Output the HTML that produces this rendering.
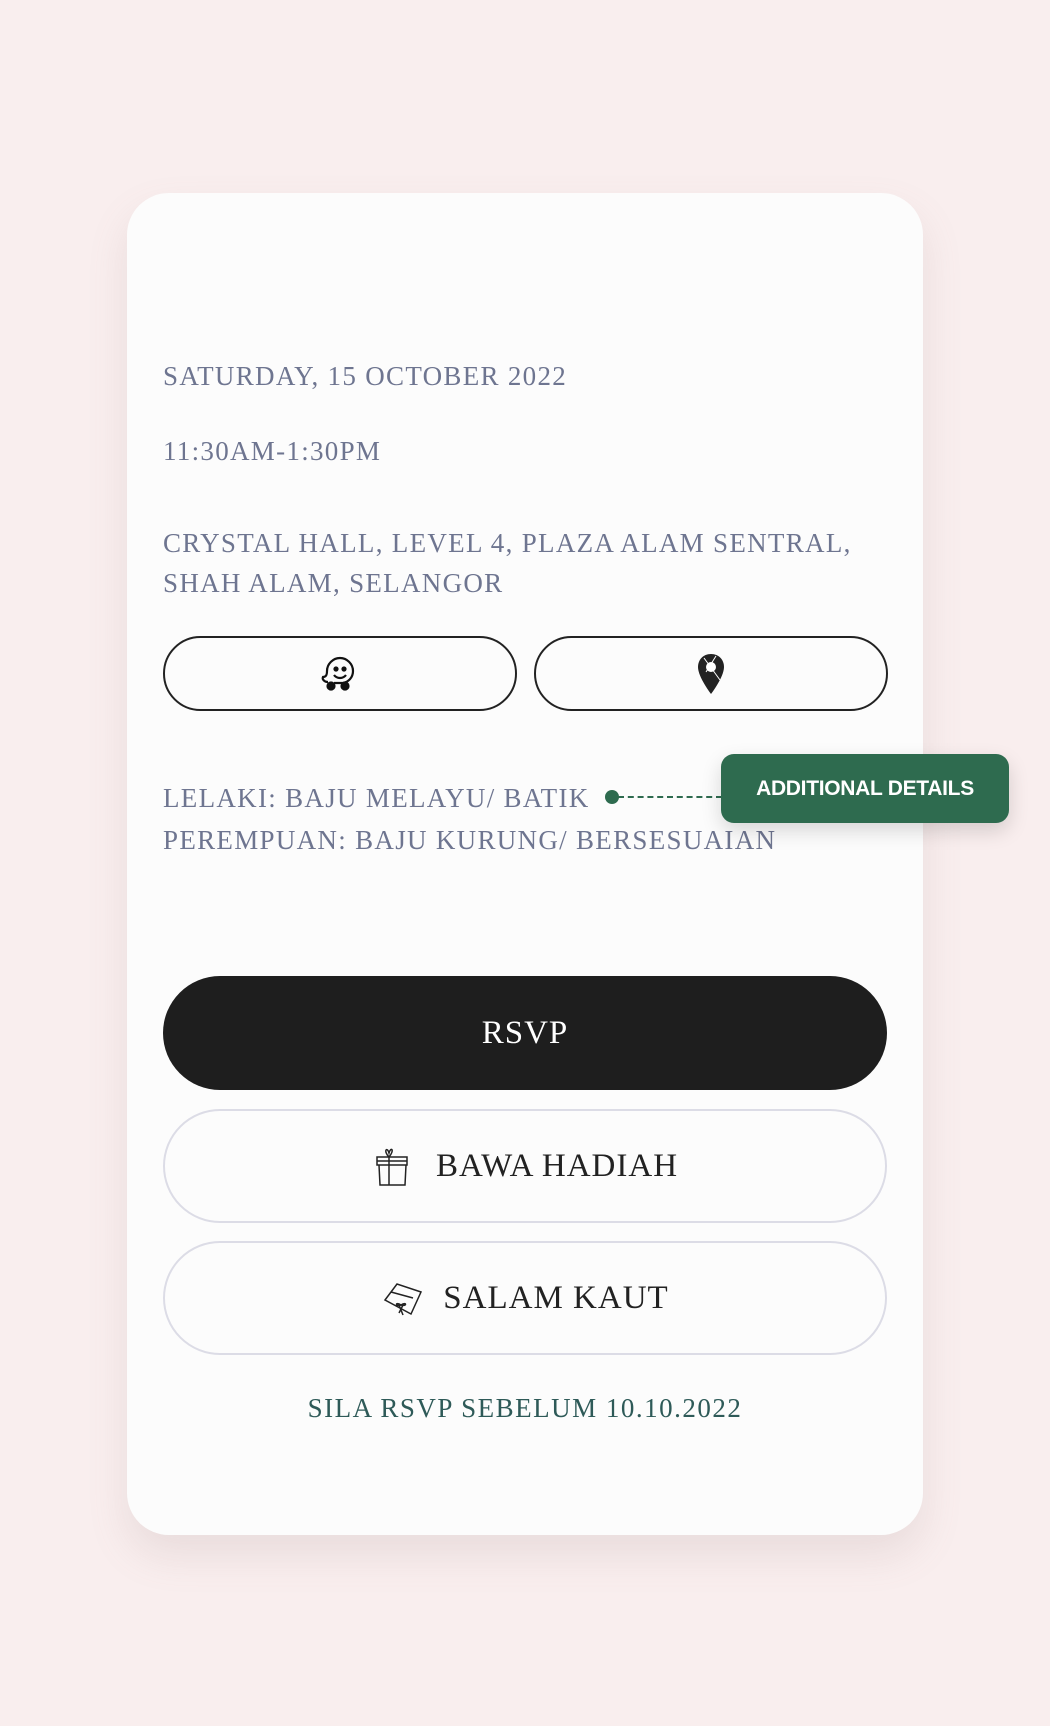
<!DOCTYPE html>
<html><head><meta charset="utf-8"><style>
*{margin:0;padding:0;box-sizing:border-box}
body{width:1050px;height:1726px;background:#f9eeee;position:relative;font-family:"Liberation Serif",serif;overflow:hidden}
.card{position:absolute;left:127px;top:193px;width:796px;height:1342px;background:#fcfcfc;border-radius:42px;box-shadow:0 20px 40px rgba(150,120,120,.15)}
.t{position:absolute;left:163px;color:#6e7590;font-size:27px;letter-spacing:1.3px;line-height:40px;white-space:nowrap}
.pill{position:absolute;border-radius:60px;display:flex;align-items:center;justify-content:center}
.nav{top:636px;height:75px;width:354px;border:2px solid #222}
.big{left:163px;width:724px;height:114px;font-size:33px;color:#222;letter-spacing:1px}
.ol{border:2px solid #dcdce6}
</style></head><body>
<div class="card"></div>
<div class="t" style="top:356px">SATURDAY, 15 OCTOBER 2022</div>
<div class="t" style="top:431px">11:30AM-1:30PM</div>
<div class="t" style="top:523px">CRYSTAL HALL, LEVEL 4, PLAZA ALAM SENTRAL,</div>
<div class="t" style="top:563px">SHAH ALAM, SELANGOR</div>
<div class="pill nav" style="left:163px"><svg width="44" height="40" viewBox="0 0 44 40" fill="none" stroke="#111" stroke-width="2.2"><path d="M10 28c-4 0-6-3-5-5 3 0 4-2 4-6 0-7 6-13 13-13s13 6 13 13c0 7-5 11-10 12H16"/><circle cx="18" cy="15" r="1.5" fill="#111"/><circle cx="26" cy="15" r="1.5" fill="#111"/><path d="M16 21c3 4 9 4 12 0"/><circle cx="13" cy="32" r="3.5" fill="#111"/><circle cx="27" cy="32" r="3.5" fill="#111"/></svg></div>
<div class="pill nav" style="left:534px"><svg width="30" height="44" viewBox="0 0 30 44"><path d="M15 2C7 2 2 8 2 15c0 10 13 27 13 27s13-17 13-27C28 8 23 2 15 2z" fill="#222"/><circle cx="15" cy="15" r="5" fill="#fff"/><path d="M8 6l16 22M20 4L10 20" stroke="#fff" stroke-width="1"/></svg></div>
<div class="t" style="top:778px">LELAKI: BAJU MELAYU/ BATIK</div>
<div class="t" style="top:820px">PEREMPUAN: BAJU KURUNG/ BERSESUAIAN</div>
<div style="position:absolute;left:605px;top:790px;width:14px;height:14px;border-radius:50%;background:#2e6b4f"></div>
<div style="position:absolute;left:618px;top:796px;width:104px;border-top:2px dashed #2e6b4f"></div>
<div style="position:absolute;left:721px;top:754px;width:288px;height:69px;border-radius:13px;background:#2e6b4f;color:#fff;font-family:'Liberation Sans',sans-serif;font-weight:bold;font-size:21px;letter-spacing:-0.3px;display:flex;align-items:center;justify-content:center;box-shadow:0 8px 20px rgba(0,0,0,.15)">ADDITIONAL DETAILS</div>
<div class="pill big" style="top:976px;background:#1e1e1e;color:#fff">RSVP</div>
<div class="pill big ol" style="top:1109px"><svg width="40" height="44" viewBox="0 0 40 44" fill="none" stroke="#222" stroke-width="1.5" style="margin-right:24px"><path d="M5 13h30v8H5zM7 21l1 20h25l1-20M17 13v28M5 17h30M17 13c-6-6-2-11 0-4 2-7 6-3 0 4"/></svg>BAWA HADIAH</div>
<div class="pill big ol" style="top:1241px"><svg width="44" height="40" viewBox="0 0 44 40" fill="none" stroke="#222" stroke-width="1.5" style="margin-right:18px"><path d="M4 22L16 6l24 8-10 22zM10 14l22 6M18 27l4 10M22 27l-4 8M20 27c-6-4-6 2 0 0 6-4 6 2 0 0"/></svg>SALAM KAUT</div>
<div style="position:absolute;left:127px;width:796px;top:1393px;text-align:center;font-size:27px;letter-spacing:1.5px;color:#2e5a58">SILA RSVP SEBELUM 10.10.2022</div>
</body></html>
